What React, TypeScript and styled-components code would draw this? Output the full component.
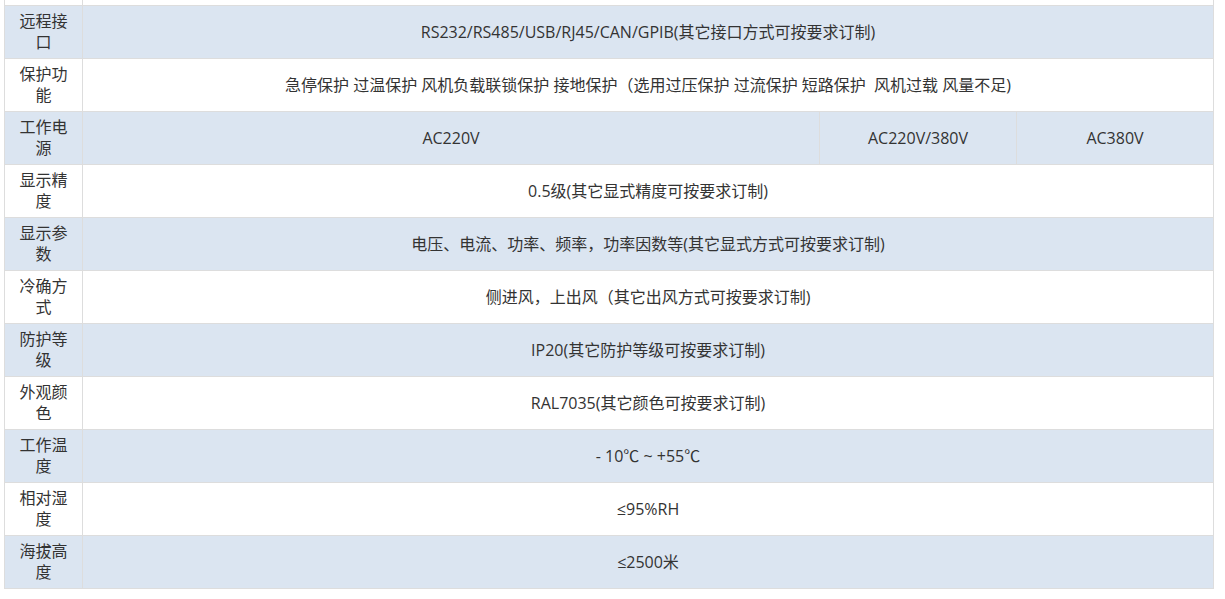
import React from 'react';
import styled, { createGlobalStyle } from 'styled-components';

const GlobalStyle = createGlobalStyle`
  html, body {
    margin: 0;
    padding: 0;
    background: #ffffff;
  }
  body {
    font-family: 'Open Sans', 'Noto Sans CJK SC', sans-serif;
    color: #333333;
  }
`;

const Page = styled.div`
  padding: 0 12px 0 4px;
`;

const SpecTable = styled.table`
  width: 1210px;
  border-collapse: collapse;
  table-layout: fixed;
  font-size: 16px;
`;

const Row = styled.tr<{ $shaded?: boolean }>`
  background: ${(p) => (p.$shaded ? '#dbe5f1' : '#ffffff')};
`;

const Cell = styled.td`
  border: 1px solid #dddddd;
  padding: 5px 12px;
  line-height: 21px;
  height: 42px;
  text-align: center;
  vertical-align: middle;
  white-space: pre-wrap;
  word-break: break-all;
`;

const LabelCell = styled(Cell)`
  padding: 5px 8px;
`;

const StubCell = styled.td`
  border: 1px solid #dddddd;
  border-top: none;
  height: 5px;
  padding: 0;
`;

type Spec = { label: string; values: string[] };

const specs: Spec[] = [
  { label: '远程接口', values: ['RS232/RS485/USB/RJ45/CAN/GPIB(其它接口方式可按要求订制)'] },
  {
    label: '保护功能',
    values: ['急停保护 过温保护 风机负载联锁保护 接地保护（选用过压保护 过流保护 短路保护  风机过载 风量不足)'],
  },
  { label: '工作电源', values: ['AC220V', 'AC220V/380V', 'AC380V'] },
  { label: '显示精度', values: ['0.5级(其它显式精度可按要求订制)'] },
  { label: '显示参数', values: ['电压、电流、功率、频率，功率因数等(其它显式方式可按要求订制)'] },
  { label: '冷确方式', values: ['侧进风，上出风（其它出风方式可按要求订制)'] },
  { label: '防护等级', values: ['IP20(其它防护等级可按要求订制)'] },
  { label: '外观颜色', values: ['RAL7035(其它颜色可按要求订制)'] },
  { label: '工作温度', values: ['- 10℃ ~ +55℃'] },
  { label: '相对湿度', values: ['≤95%RH'] },
  { label: '海拔高度', values: ['≤2500米'] },
];

const App = () => (
  <>
    <GlobalStyle />
    <Page>
      <SpecTable>
        <colgroup>
          <col style={{ width: 78 }} />
          <col style={{ width: 737 }} />
          <col style={{ width: 197 }} />
          <col style={{ width: 197 }} />
        </colgroup>
        <tbody>
          <Row>
            <StubCell />
            <StubCell colSpan={3} />
          </Row>
          {specs.map((spec, i) => (
            <Row key={spec.label} $shaded={i % 2 === 0}>
              <LabelCell>{spec.label}</LabelCell>
              {spec.values.length === 1 ? (
                <Cell colSpan={3}>{spec.values[0]}</Cell>
              ) : (
                spec.values.map((v) => <Cell key={v}>{v}</Cell>)
              )}
            </Row>
          ))}
        </tbody>
      </SpecTable>
    </Page>
  </>
);

export default App;
